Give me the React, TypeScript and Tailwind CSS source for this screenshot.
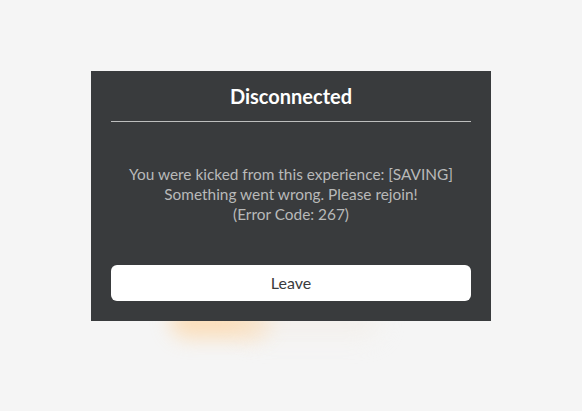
export default function App() {
  return (
    <div className="relative h-[411px] w-[582px] overflow-hidden bg-[#f5f5f5] pt-[71px] font-['Lato','Noto_Sans',sans-serif]">
      {/* soft glow peeking out from under the dialog */}
      <div className="absolute left-[170px] top-[302px] h-[36px] w-[100px] rounded-full bg-[#ffcf94] opacity-60 blur-[10px]" />
      <div className="absolute left-[240px] top-[305px] h-[32px] w-[140px] rounded-full bg-[#f2ebe3] opacity-50 blur-[12px]" />

      <div className="relative mx-auto flex w-[400px] flex-col bg-[#393b3d] px-5 pb-5">
        <div className="flex h-[50px] items-center justify-center text-[20px] font-bold text-white">
          Disconnected
        </div>
        <div className="h-px bg-[#bdbebe]" />
        <div className="flex h-[143px] flex-col items-center justify-center text-center text-[15.4px] leading-5 text-[#b8b9b9]">
          <p>You were kicked from this experience: [SAVING]</p>
          <p>Something went wrong. Please rejoin!</p>
          <p>(Error Code: 267)</p>
        </div>
        <button className="flex h-9 w-full items-center justify-center rounded-md bg-white text-[16px] text-[#393b3d]">
          Leave
        </button>
      </div>
    </div>
  );
}
